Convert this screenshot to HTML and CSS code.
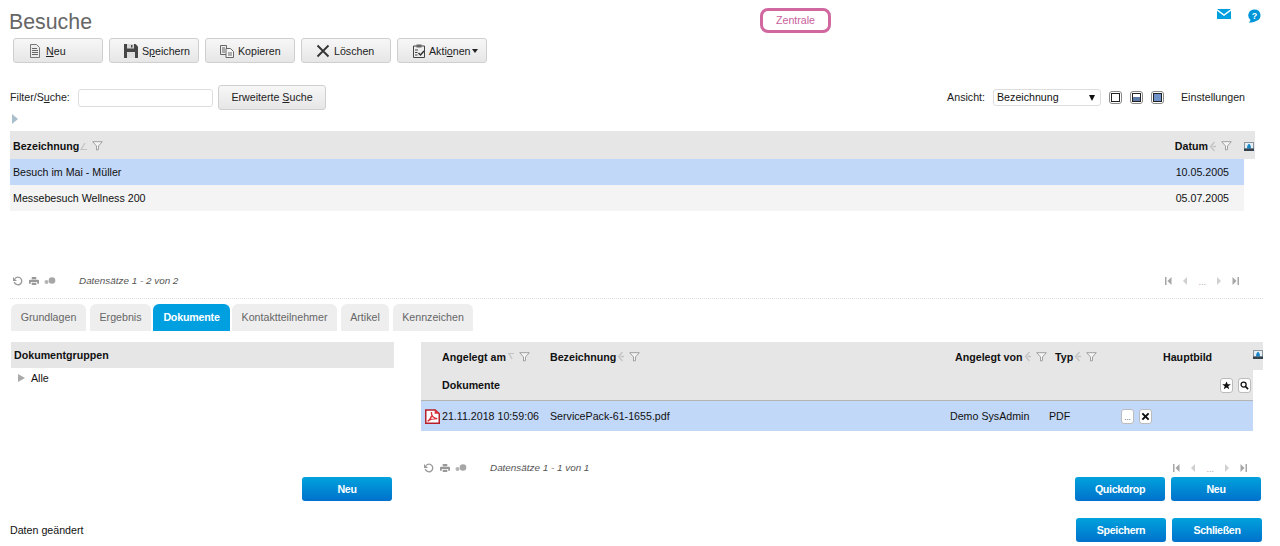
FILE: index.html
```html
<!DOCTYPE html>
<html lang="de">
<head>
<meta charset="utf-8">
<title>Besuche</title>
<link rel="stylesheet" href="styles.css">
</head>
<body>
<svg class="defs" width="0" height="0" aria-hidden="true">
  <defs>
    <symbol id="sort" viewBox="0 0 7 11"><path d="M5.500 1 1.500 5.500 5.500 10M3.500 5.500H7" fill="none" stroke="#c2c2c2" stroke-width="1.300"/></symbol>
    <symbol id="sortup" viewBox="0 0 7 11"><path d="M5 2 1 8.500h6" fill="none" stroke="#c2c2c2" stroke-width="1.200"/></symbol>
    <symbol id="sortdn" viewBox="0 0 7 11"><path d="M1 2.500h6M2 2.500 5 8" fill="none" stroke="#c2c2c2" stroke-width="1.200"/></symbol>
    <symbol id="filter" viewBox="0 0 11 10"><path d="M.7.7h9.600L6.500 5v3.600L4.500 9V5z" fill="#f4f4f4" stroke="#a0a0a0"/></symbol>
    <symbol id="img" viewBox="0 0 10 9"><rect width="10" height="9" fill="#8d959c"/><rect x="1" y="1" width="8" height="5.500" fill="#e4eef5"/><path d="M3 6.500c0-3 1-4.500 2-4.500s2 1.500 2 4.500z" fill="#1786c8"/><rect y="6.500" width="10" height="2.500" fill="#34424e"/></symbol>
    <symbol id="refresh" viewBox="0 0 10 10"><path d="M2 2.600A3.800 3.800 0 1 1 1.300 6" fill="none" stroke="#999" stroke-width="1.300"/><path d="M0 1v4h4z" fill="#999"/></symbol>
    <symbol id="print" viewBox="0 0 11 10"><path d="M3 .5h5v2.500H3zM1 3.500h9a1 1 0 0 1 1 1V8H9V6H2v2H0V4.500a1 1 0 0 1 1-1zM3 7h5v2.500H3z" fill="#999"/></symbol>
    <symbol id="dots" viewBox="0 0 12 8"><circle cx="2.500" cy="5" r="2" fill="#b4b4b4"/><circle cx="8" cy="3.500" r="3.300" fill="#a6a6a6"/></symbol>
    <symbol id="first" viewBox="0 0 8 8"><path d="M1 0h1.500v8H1zM7.500 0v8L3.500 4z" fill="#a6a6a6"/></symbol>
    <symbol id="prev" viewBox="0 0 4 8"><path d="M4 0v8L0 4z" fill="#d0d0d0"/></symbol>
    <symbol id="next" viewBox="0 0 4 8"><path d="M0 0v8l4-4z" fill="#d0d0d0"/></symbol>
    <symbol id="last" viewBox="0 0 8 8"><path d="M7 0H5.500v8H7zM.5 0v8l4-4z" fill="#a6a6a6"/></symbol>
  </defs>
</svg>

<header class="top">
  <h1 class="title">Besuche</h1>
  <div class="pill">Zentrale</div>
  <div class="top-icons">
    <svg class="ico-mail" viewBox="0 0 14 10"><path d="M0 0h14L7 5.200z M0 1.800l7 5.200 7-5.200V10H0z" fill="#00a0e0"/></svg>
    <svg class="ico-help" viewBox="0 0 14 14"><path d="M7.500 .5a6 5.800 0 0 1 1.500 11.400C7 13 4 13.700 1.500 13.500c1-.6 1.800-1.500 1.900-2.800A6 5.800 0 0 1 7.500 .5z" fill="#0095d8"/><text x="7.500" y="9.800" class="help-q">?</text></svg>
  </div>
</header>

<nav class="toolbar">
  <button class="btn tool">
    <svg class="ico" viewBox="0 0 14 14"><path d="M2.500.5h6l3 3v10h-9z" fill="#ececec" stroke="#777"/><path d="M4 4.500h5M4 6.500h6M4 8.500h6M4 10.500h6" stroke="#666"/></svg>
    <span class="lbl-neu"><u>N</u>eu</span>
  </button>
  <button class="btn tool">
    <svg class="ico" viewBox="0 0 14 14"><path d="M0 0h11.500L14 2.500V14H0z" fill="#464646"/><rect x="3" y="0" width="7" height="4.500" fill="#d8d8d8"/><rect x="7" y="1" width="1.500" height="2.500" fill="#464646"/><rect x="3" y="8" width="8" height="6" fill="#dedede"/></svg>
    <span>S<u>p</u>eichern</span>
  </button>
  <button class="btn tool">
    <svg class="ico" viewBox="0 0 14 14"><path d="M.5 1.500h6v9h-6z" fill="#eee" stroke="#666"/><path d="M6 4.500h4.500l3 3v6H6z" fill="#f6f6f6" stroke="#666"/><path d="M2 4h3M2 6h3M2 8h3M8 9h4M8 11h4" stroke="#666"/></svg>
    <span>Kopieren</span>
  </button>
  <button class="btn tool">
    <svg class="ico" viewBox="0 0 14 14"><path d="M1.500 1.500l11 11M12.500 1.500l-11 11" stroke="#333" stroke-width="1.800"/></svg>
    <span>Löschen</span>
  </button>
  <button class="btn tool">
    <svg class="ico" viewBox="0 0 14 14"><path d="M1.500 2h11v11.500h-11z" fill="#eee" stroke="#444"/><rect x="4.500" y=".5" width="5" height="3" fill="#666"/><path d="M3 6h3M3 8.500h2.500M3 11h2.500" stroke="#444"/><path d="M6.500 9l2 2 3.500-4" fill="none" stroke="#333" stroke-width="1.500"/></svg>
    <span class="lbl-akt">Akti<u>o</u>nen</span><i class="caret"></i>
  </button>
</nav>

<section class="filter">
  <label class="filter-label">Filter/S<u>u</u>che:</label>
  <input class="filter-input" type="text">
  <button class="btn adv">Erweiterte <u>S</u>uche</button>
  <div class="view">
    <span>Ansicht:</span>
    <div class="select"><span>Bezeichnung</span><i class="select-arrow"></i></div>
    <span class="vbox"><i class="v-none"></i></span>
    <span class="vbox"><i class="v-half"></i></span>
    <span class="vbox"><i class="v-full"></i></span>
    <span class="settings">Einstellungen</span>
  </div>
</section>

<div class="expander"><i class="expander-arrow"></i></div>

<section class="master">
  <div class="thead">
    <div class="th"><b>Bezeichnung</b><svg class="s-sort"><use href="#sortup"/></svg><svg class="s-filter"><use href="#filter"/></svg></div>
    <div class="th th-date"><b>Datum</b><svg class="s-sort"><use href="#sort"/></svg><svg class="s-filter"><use href="#filter"/></svg><svg class="s-img"><use href="#img"/></svg></div>
  </div>
  <div class="trow selected"><span>Besuch im Mai - Müller</span><span class="date">10.05.2005</span></div>
  <div class="trow alt"><span>Messebesuch Wellness 200</span><span class="date">05.07.2005</span></div>
</section>

<div class="pager pager-master">
  <div class="pager-tools">
    <svg class="p-i"><use href="#refresh"/></svg><svg class="p-i"><use href="#print"/></svg><svg class="p-d"><use href="#dots"/></svg>
  </div>
  <em class="count">Datensätze 1 - 2 von 2</em>
  <div class="pager-nav">
    <svg class="n-e"><use href="#first"/></svg><svg class="n-a"><use href="#prev"/></svg><span class="ell">...</span><svg class="n-a"><use href="#next"/></svg><svg class="n-e"><use href="#last"/></svg>
  </div>
</div>

<hr class="divider">

<nav class="tabs">
  <a class="tab t1">Grundlagen</a>
  <a class="tab t2">Ergebnis</a>
  <a class="tab active">Dokumente</a>
  <a class="tab t4">Kontaktteilnehmer</a>
  <a class="tab t5">Artikel</a>
  <a class="tab t6">Kennzeichen</a>
</nav>

<main class="detail">
  <section class="groups">
    <div class="groups-head">Dokumentgruppen</div>
    <div class="tree"><i class="tree-arrow"></i><span>Alle</span></div>
    <div class="groups-foot"><button class="btn-blue">Neu</button></div>
  </section>

  <section class="docs">
    <div class="dh1">
      <div class="dc"><b>Angelegt am</b><svg class="s-sort"><use href="#sortdn"/></svg><svg class="s-filter"><use href="#filter"/></svg></div>
      <div class="dc"><b>Bezeichnung</b><svg class="s-sort"><use href="#sort"/></svg><svg class="s-filter"><use href="#filter"/></svg></div>
      <div class="dc"><b>Angelegt von</b><svg class="s-sort"><use href="#sort"/></svg><svg class="s-filter"><use href="#filter"/></svg></div>
      <div class="dc"><b>Typ</b><svg class="s-sort"><use href="#sort"/></svg><svg class="s-filter"><use href="#filter"/></svg></div>
      <div class="dc dc-last"><b>Hauptbild</b><svg class="s-img"><use href="#img"/></svg></div>
    </div>
    <div class="dh2">
      <b>Dokumente</b>
      <div class="dh2-tools">
        <span class="mini"><svg viewBox="0 0 10 10"><path d="M5 .5l1.400 3H9.800L7 5.800l1 3.400-3-2-3 2 1-3.400L.2 3.500h3.400z" fill="#111"/></svg></span>
        <span class="mini"><svg viewBox="0 0 10 10"><circle cx="4" cy="4" r="2.800" fill="none" stroke="#111" stroke-width="1.400"/><path d="M6 6l3 3" stroke="#111" stroke-width="1.800"/></svg></span>
      </div>
    </div>
    <div class="drow">
      <svg class="pdf" viewBox="0 0 14 14"><path d="M.7 1h8.800l3.800 3.500v8.800H.7z" fill="#fff" stroke="#b5202a" stroke-width="1.400"/><path d="M9 0l5 4.500H9z" fill="#d8323a"/><path d="M2.500 11.500C5 10 7 6 6 3c-.5 3 2 6 5.500 6-3 0-7 .5-9 2.500z" fill="none" stroke="#d8323a" stroke-width="1.300"/></svg>
      <span>21.11.2018 10:59:06</span>
      <span>ServicePack-61-1655.pdf</span>
      <span>Demo SysAdmin</span>
      <span>PDF</span>
      <div class="row-tools">
        <span class="mini mini-dots">...</span>
        <span class="mini"><svg viewBox="0 0 10 10"><path d="M1.500 1.500l7 7M8.500 1.500l-7 7" stroke="#111" stroke-width="2.200"/></svg></span>
      </div>
    </div>
    <div class="pager pager-docs">
      <div class="pager-tools">
        <svg class="p-i"><use href="#refresh"/></svg><svg class="p-i"><use href="#print"/></svg><svg class="p-d"><use href="#dots"/></svg>
      </div>
      <em class="count">Datensätze 1 - 1 von 1</em>
      <div class="pager-nav">
        <svg class="n-e"><use href="#first"/></svg><svg class="n-a"><use href="#prev"/></svg><span class="ell">...</span><svg class="n-a"><use href="#next"/></svg><svg class="n-e"><use href="#last"/></svg>
      </div>
    </div>
    <div class="docs-foot"><button class="btn-blue">Quickdrop</button><button class="btn-blue">Neu</button></div>
  </section>
</main>

<footer class="foot">
  <span>Daten geändert</span>
  <div class="foot-btns"><button class="btn-blue">Speichern</button><button class="btn-blue">Schließen</button></div>
</footer>
</body>
</html>
```

FILE: styles.css
```css
* { box-sizing: border-box; }
html, body { margin: 0; padding: 0; }
body {
  width: 1280px;
  height: 546px;
  overflow: hidden;
  background: #fff;
  color: #222;
  font: 10.67px/1.2 "Liberation Sans", Arial, sans-serif;
}
.defs { display: block; height: 0; }
u { text-underline-offset: 1px; }
i { display: block; }
svg { display: block; flex: none; }

/* header */
.top {
  display: grid;
  grid-template-columns: 760px 71px 1fr;
  height: 38px;
}
.title {
  margin: 9px 0 0 9px;
  font-size: 21.33px;
  font-weight: 400;
  line-height: 26px;
  color: #666;
}
.pill {
  margin-top: 8px;
  height: 25px;
  border: 3px solid #d0689f;
  border-radius: 8px;
  color: #c8609c;
  text-align: center;
  line-height: 19px;
}
.top-icons {
  display: flex;
  justify-content: flex-end;
  gap: 16px;
  padding: 9px 19px 0 0;
}
.ico-mail { width: 14px; height: 10px; }
.ico-help { width: 14px; height: 14px; }
.help-q { font: bold 9px "Liberation Sans", sans-serif; fill: #fff; text-anchor: middle; }

/* buttons */
.btn {
  font: inherit;
  color: #222;
  border: 1px solid #cfcfcf;
  border-radius: 3px;
  background: linear-gradient(#f7f7f7, #e6e6e6);
  padding: 0;
}
.toolbar { display: flex; gap: 6px; padding-left: 13px; height: 25px; }
.tool {
  width: 90px;
  height: 25px;
  display: flex;
  align-items: center;
  gap: 4px;
  padding-left: 14px;
}
.tool span { margin-top: 1px; }
.ico { width: 14px; height: 14px; }
.caret {
  width: 0; height: 0;
  margin-left: -2px;
  border-left: 3.500px solid transparent;
  border-right: 3.500px solid transparent;
  border-top: 4px solid #222;
}
.lbl-akt { margin-left: -1px; }
.btn-blue {
  width: 90px;
  height: 24px;
  border: 0;
  border-radius: 3px;
  background: linear-gradient(#00a2dc, #0071cc);
  color: #fff;
  font: bold 10.67px "Liberation Sans", Arial, sans-serif;
  letter-spacing: -.35px;
  padding: 0;
}

/* filter row */
.filter {
  display: flex;
  align-items: center;
  height: 25px;
  margin-top: 22px;
  padding: 0 35px 0 10px;
}
.filter-label { width: 68px; }
.filter-input {
  width: 135px;
  height: 18px;
  border: 1px solid #ddd;
  border-radius: 3px;
  background: #fff;
}
.adv { width: 108px; height: 25px; margin-left: 5px; }
.view { margin-left: auto; display: flex; align-items: center; }
.select {
  width: 108px;
  height: 17px;
  margin-left: 8px;
  border: 1px solid #ddd;
  border-radius: 3px;
  display: flex;
  align-items: center;
  justify-content: space-between;
  padding: 0 5px 0 3px;
  color: #111;
}
.select-arrow {
  width: 0; height: 0;
  border-left: 3px solid transparent;
  border-right: 3px solid transparent;
  border-top: 6px solid #111;
}
.vbox {
  width: 13px;
  height: 13px;
  margin-left: 8px;
  border: 1px solid #888;
  border-radius: 3px;
  padding: 1px;
  background: #fff;
}
.vbox i { width: 9px; height: 9px; border: 1px solid #222; }
.v-half { background: linear-gradient(#fff 45%, #5e7aa8 45%); }
.v-full { background: #6f92c8; }
.settings { margin-left: 17px; }

.expander { height: 21px; padding: 4px 0 0 12px; }
.expander-arrow {
  width: 0; height: 0;
  border-left: 6px solid #a9bfcc;
  border-top: 5px solid transparent;
  border-bottom: 5px solid transparent;
}

/* master table */
.master { width: 1245px; margin-left: 10px; height: 143px; }
.thead {
  display: flex;
  justify-content: space-between;
  height: 28px;
  background: #e6e6e6;
  padding: 2px 0 0 3px;
}
.th { display: flex; align-items: center; }
.th b, .dc b, .dh2 b, .groups-head { color: #111; }
.s-sort { width: 7px; height: 11px; margin-left: 1px; }
.s-filter { width: 11px; height: 10px; margin-left: 5px; }
.s-img { width: 10px; height: 9px; margin-left: 12px; margin-right: 1px; }
.trow {
  display: flex;
  justify-content: space-between;
  align-items: center;
  width: 1234px;
  height: 26px;
  padding: 0 15px 0 3px;
  color: #111;
}
.selected { background: #c2d8f8; }
.alt { background: #f4f4f4; }

/* pager */
.pager { display: flex; align-items: center; height: 14px; color: #555; }
.pager-master { padding: 0 40px 0 13px; }
.pager-tools { display: flex; align-items: center; gap: 6px; width: 66px; }
.p-i { width: 10px; height: 10px; }
.p-d { width: 12px; height: 8px; margin-left: -1px; }
.count { font-size: 9.900px; color: #555; }
.pager-nav { margin-left: auto; display: flex; align-items: center; gap: 11px; }
.n-e { width: 8px; height: 8px; }
.n-a { width: 4px; height: 8px; }
.ell { color: #aaa; font-size: 9px; margin-top: 2px; }

.divider {
  width: 1253px;
  height: 0;
  margin: 10px 0 0 10px;
  border: 0;
  border-top: 1px dotted #ddd;
}

/* tabs */
.tabs { display: flex; height: 27px; margin: 5px 0 0 11px; }
.tab {
  display: flex;
  align-items: center;
  justify-content: center;
  height: 27px;
  border-radius: 6px 6px 0 0;
  background: #eee;
  color: #666;
}
.t1 { width: 75px; margin-right: 4px; }
.t2 { width: 61px; margin-right: 2px; }
.active { width: 77px; margin-right: 2px; background: #009fe0; color: #fff; font-weight: bold; letter-spacing: -.2px; }
.t4 { width: 105px; margin-right: 4px; }
.t5 { width: 48px; margin-right: 4px; }
.t6 { width: 80px; }

/* detail */
.detail { display: grid; grid-template-columns: 383px 842px; column-gap: 27px; margin: 11px 0 0 11px; height: 159px; }
.groups-head {
  height: 26px;
  background: #e6e6e6;
  padding-left: 3px;
  line-height: 26px;
  font-weight: bold;
}
.tree { display: flex; align-items: center; height: 20px; padding-left: 7px; color: #111; }
.tree-arrow {
  width: 0; height: 0;
  margin-right: 6px;
  border-left: 7px solid #aaa;
  border-top: 4.500px solid transparent;
  border-bottom: 4.500px solid transparent;
}
.groups-foot { display: flex; justify-content: flex-end; padding: 89px 2px 0 0; }

.dh1, .dh2, .drow { display: grid; align-items: center; }
.dh1 {
  grid-template-columns: 108px 405px 100px 108px 100px;
  height: 28px;
  padding: 2px 0 0 21px;
  background: #e6e6e6;
}
.dc { display: flex; align-items: center; }
.dc-last { justify-content: space-between; }
.dc-last .s-img { margin: -4px 0 0; }
.dh2 {
  grid-template-columns: 1fr auto;
  width: 832px;
  height: 31px;
  padding: 0 2px 0 21px;
  background: #e6e6e6;
  border-bottom: 1px solid #b4b4b4;
}
.dh2-tools { display: flex; gap: 5px; }
.mini {
  display: flex;
  align-items: center;
  justify-content: center;
  width: 13px;
  height: 15px;
  border: 1px solid #bbb;
  border-radius: 3px;
  background: #fff;
}
.mini svg { width: 9px; height: 9px; }
.mini-dots { color: #444; font-size: 8px; line-height: 10px; padding-top: 3px; }
.drow {
  grid-template-columns: 21px 108px 400px 99px 72px 1fr;
  width: 832px;
  height: 30px;
  background: #c2d8f8;
  color: #111;
}
.pdf { width: 15px; height: 15px; margin-left: 4px; }
.row-tools { display: flex; gap: 5px; }
.pager-docs { margin-top: 30px; padding: 0 15px 0 3px; }
.docs-foot { display: flex; justify-content: flex-end; gap: 6px; padding: 2px 2px 0 0; }

/* footer */
.foot {
  display: flex;
  align-items: center;
  justify-content: space-between;
  height: 24px;
  margin-top: 17px;
  padding: 0 18px 0 10px;
  color: #111;
}
.foot-btns { display: flex; gap: 6px; }
```
